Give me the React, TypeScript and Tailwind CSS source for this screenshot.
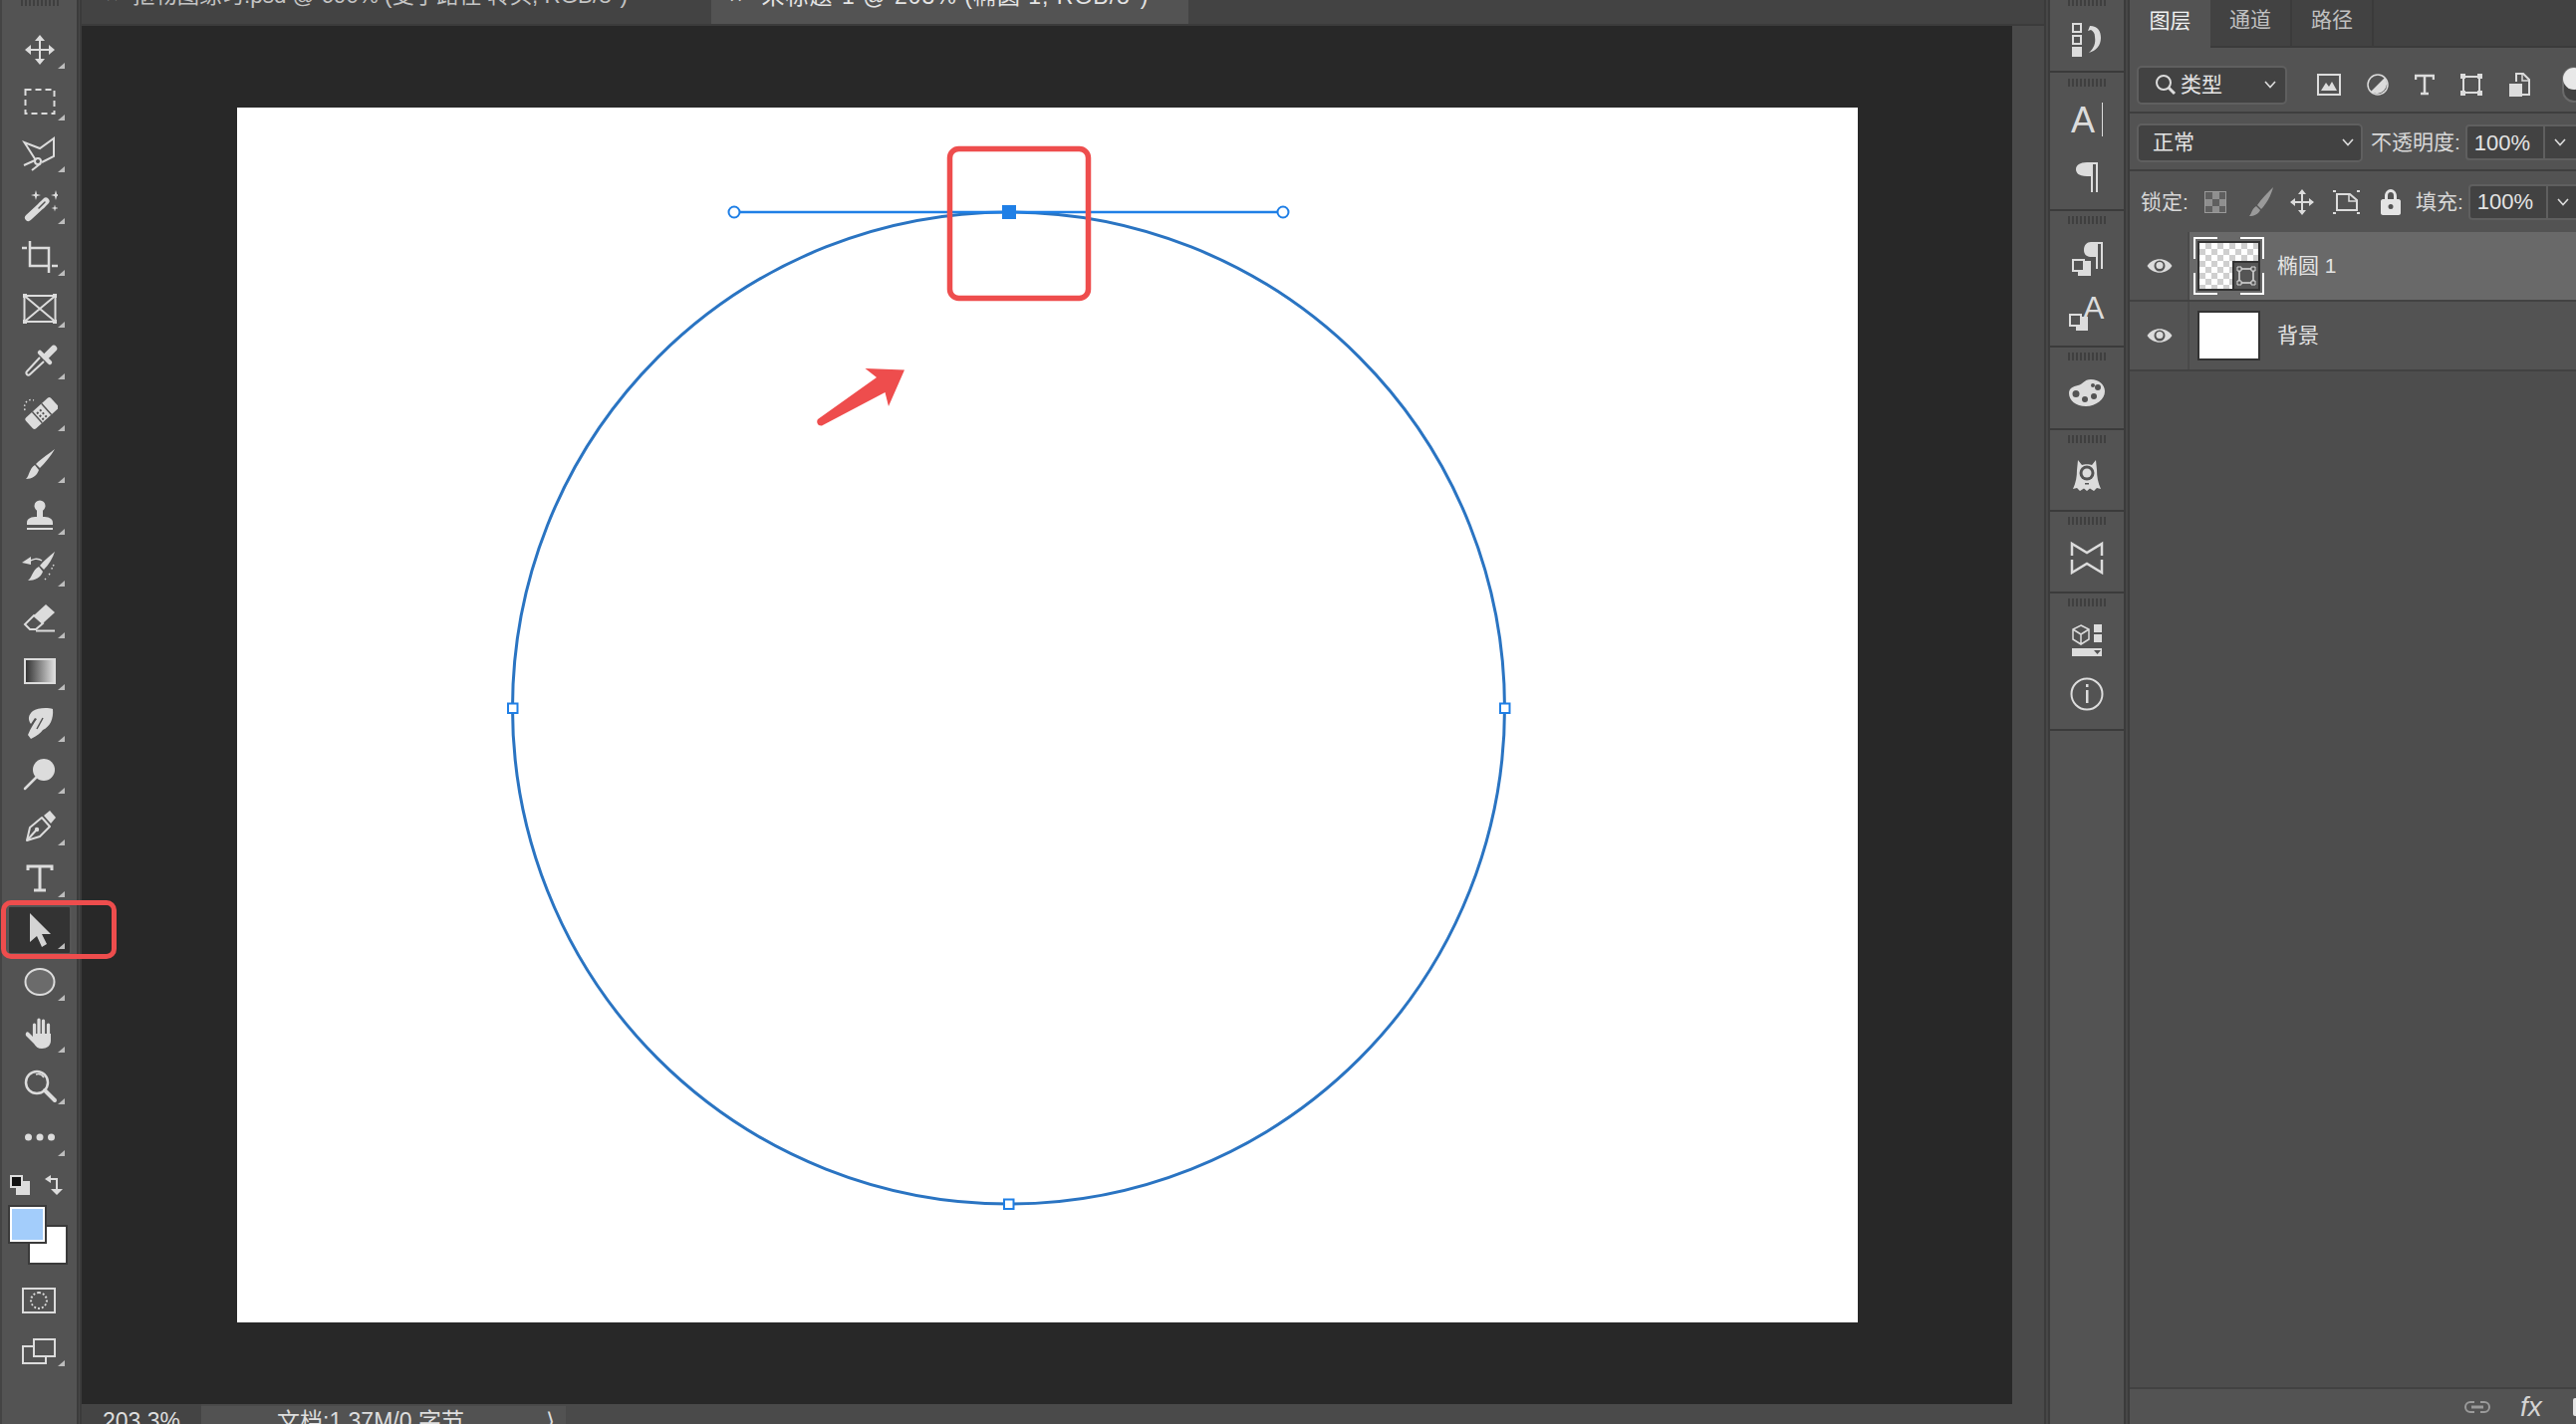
import type { ReactNode } from "react";

const FONT = "font-['Liberation_Sans','Noto_Sans_CJK_SC',sans-serif]";

function Ic({ w = 36, h = 36, children }: { w?: number; h?: number; children: ReactNode }) {
  return (
    <svg width={w} height={h} viewBox={`0 0 ${w} ${h}`} fill="none" className="block shrink-0 text-[#dcdcdc]">
      {children}
    </svg>
  );
}

function Star({ x, y, r }: { x: number; y: number; r: number }) {
  const k = r * 0.22;
  return (
    <path
      fill="currentColor"
      d={`M${x} ${y - r}L${x + k} ${y - k}L${x + r} ${y}L${x + k} ${y + k}L${x} ${y + r}L${x - k} ${y + k}L${x - r} ${y}L${x - k} ${y - k}Z`}
    />
  );
}

function Tool({ children, corner = true, active = false }: { children: ReactNode; corner?: boolean; active?: boolean }) {
  return (
    <div className="relative flex h-[52px] items-center justify-center">
      {active && <div className="absolute inset-x-[5px] inset-y-px rounded-[3px] border-2 border-[#565656] bg-[#333333]" />}
      <div className="relative">{children}</div>
      {corner && (
        <svg width="7" height="6" viewBox="0 0 7 6" className="absolute left-[56px] top-[39px] text-[#bdbdbd]">
          <path d="M7 0V6H0Z" fill="currentColor" />
        </svg>
      )}
    </div>
  );
}

const S = { stroke: "currentColor", strokeWidth: 2 };

const moveIcon = (
  <svg width="32" height="32" viewBox="0 0 32 32" className="block shrink-0 text-[#dcdcdc]" fill="none">
    <path d="M16 3V29M3 16H29" {...S} />
    <path d="M16 1L21 7H11ZM16 31L21 25H11ZM1 16L7 11V21ZM31 16L25 11V21Z" fill="currentColor" />
  </svg>
);

const tools: ReactNode[] = [
  moveIcon,
  <Ic>
    <rect x="3.5" y="6" width="29" height="24" {...S} strokeDasharray="6 4" />
  </Ic>,
  <Ic>
    <path d="M14 25L2.5 7L18 13L32 3V21L20 27" {...S} />
    <circle cx="16" cy="26" r="3" {...S} />
    <path d="M2 30L13 25M10 35L19 28" {...S} />
  </Ic>,
  <Ic>
    <path d="M6.5 30.5L20 18" stroke="currentColor" strokeWidth="7" strokeLinecap="round" />
    <path d="M20 18L24 14" stroke="currentColor" strokeWidth="7" strokeLinecap="round" />
    <path d="M17 21L23 15" stroke="#535353" strokeWidth="1.5" strokeLinecap="round" />
    <Star x={14} y={8} r={5} />
    <Star x={34} y={8} r={5} />
    <Star x={33} y={21} r={3.5} />
  </Ic>,
  <Ic>
    <path d="M8 2V27H27M27 34V9H8M0 9H5M30 27H36" stroke="currentColor" strokeWidth="2.5" />
  </Ic>,
  <Ic>
    <rect x="2.5" y="5" width="31" height="26" {...S} />
    <path d="M2.5 5L33.5 31M33.5 5L2.5 31" {...S} />
    <path d="M1 3h4v4H1zM31 3h4v4h-4zM1 29h4v4H1zM31 29h4v4h-4z" fill="currentColor" />
  </Ic>,
  <Ic>
    <path d="M24 14L32 6" stroke="currentColor" strokeWidth="6.5" strokeLinecap="round" />
    <path d="M18 10L28 20" stroke="currentColor" strokeWidth="4.5" strokeLinecap="round" />
    <path d="M22 19L8 32C6 34 3 31 5 29L18 15" {...S} />
  </Ic>,
  <Ic>
    <g transform="rotate(-42 20 19)">
      <rect x="3" y="11.5" width="34" height="15" rx="2.5" fill="currentColor" />
      <rect x="13" y="11.5" width="1.5" height="15" fill="#535353" />
      <rect x="25.5" y="11.5" width="1.5" height="15" fill="#535353" />
      <path d="M16 15h2v2h-2zM20 15h2v2h-2zM16 19h2v2h-2zM20 19h2v2h-2zM16 23h2v2h-2zM20 23h2v2h-2z" fill="#535353" />
    </g>
    <path d="M3 16C1 9 6 4 12 6" stroke="currentColor" strokeWidth="1.5" strokeDasharray="1.5 2.5" />
  </Ic>,
  <Ic>
    <path d="M33 3C28 7 20 12 14 18L18 22C23 17 29 10 33 3Z" fill="currentColor" />
    <path d="M13 19L17 24C15 30 10 33 4 33C8 29 7 23 13 19Z" fill="currentColor" />
  </Ic>,
  <Ic>
    <circle cx="18" cy="8" r="5.5" fill="currentColor" />
    <path d="M15 12H21V19C26 19 31 20 31 25V27H5V25C5 20 10 19 15 19Z" fill="currentColor" />
    <path d="M5 30H31V32H5Z" fill="currentColor" />
  </Ic>,
  <Ic>
    <path d="M33 2C28 6 22 11 18 16L22 20C27 15 31 8 33 2Z" fill="currentColor" />
    <path d="M17 17L21 22C19 28 13 31 6 31C11 27 10 21 17 17Z" fill="currentColor" />
    <path d="M6 13C10 9 16 8 20 11" stroke="currentColor" strokeWidth="1.5" />
    <path d="M0 13L9 7V15Z" fill="currentColor" />
    <path d="M32 15L29 21M28 24L26 27M24 29L23 30" stroke="currentColor" strokeWidth="1.5" strokeDasharray="1.5 2" />
  </Ic>,
  <Ic>
    <path d="M24 3L33 11L21 22L12 14Z" fill="currentColor" />
    <path d="M12 14L21 22L14 28H8L3 23Z" {...S} />
    <path d="M14 29.5H33" {...S} />
  </Ic>,
  <svg width="32" height="26" viewBox="0 0 32 26" className="block shrink-0">
    <defs>
      <linearGradient id="grad" x1="0" x2="1" y1="0" y2="0">
        <stop offset="0" stopColor="#2d2d2d" />
        <stop offset="1" stopColor="#e0e0e0" />
      </linearGradient>
    </defs>
    <rect x="1" y="1" width="30" height="24" fill="url(#grad)" stroke="#dcdcdc" strokeWidth="2" />
  </svg>,
  <Ic>
    <path
      d="M31 4C25 2 15 3 11 6C6 10 6 15 9 19L13 13L15 14C12 18 9 23 6 30L9 34C15 31 19 28 21 25C28 22 32 14 31 4Z"
      fill="currentColor"
    />
    <path d="M21 13L15 24" stroke="#535353" strokeWidth="1.5" />
  </Ic>,
  <Ic>
    <circle cx="22" cy="13" r="11" fill="currentColor" />
    <path d="M14 21L3 32" stroke="currentColor" strokeWidth="2.5" strokeLinecap="round" />
  </Ic>,
  <Ic>
    <path d="M5 32L8 19L20 9L28 18L18 28Z" {...S} strokeLinejoin="round" />
    <path d="M22 7L28 2L34 9L29 15Z" fill="currentColor" />
    <path d="M5 32L14 22" {...S} />
    <circle cx="15" cy="21" r="2.2" fill="currentColor" />
  </Ic>,
  <Ic>
    <path d="M6 10V6H30V10M18 6V30M12 30H24" stroke="currentColor" strokeWidth="3" />
  </Ic>,
  <Ic>
    <path d="M8 1L29 22H20L25 32L20 35L15 24L8 30Z" fill="#d4d4d4" />
  </Ic>,
  <svg width="32" height="28" viewBox="0 0 32 28" className="block shrink-0">
    <ellipse cx="16" cy="14" rx="14.5" ry="13" fill="#6b6b6b" stroke="#dcdcdc" strokeWidth="2" />
  </svg>,
  <Ic>
    <path d="M11 18H29V25C29 30 25 33 20 33C16 33 14 31 12 28L4 20C3 18 5 15 7 17L11 21Z" fill="currentColor" />
    <path d="M12.5 20V9M17 20V4M21.5 20V5M26.5 20V9" stroke="currentColor" strokeWidth="3.2" strokeLinecap="round" />
  </Ic>,
  <Ic>
    <circle cx="15" cy="15" r="11" stroke="currentColor" strokeWidth="2.5" />
    <path d="M22 10C20 7 17 6 14 7" stroke="currentColor" strokeWidth="1.5" />
    <path d="M23 23L33 33" stroke="currentColor" strokeWidth="4" strokeLinecap="round" />
  </Ic>,
  <Ic>
    <circle cx="6.5" cy="18" r="3.5" fill="currentColor" />
    <circle cx="18" cy="18" r="3.5" fill="currentColor" />
    <circle cx="29.5" cy="18" r="3.5" fill="currentColor" />
  </Ic>,
];

function Grip({ clip = false }: { clip?: boolean }) {
  return (
    <div className={`flex w-[38px] justify-between ${clip ? "h-[6px]" : "h-[8px]"}`}>
      {[0, 1, 2, 3, 4, 5, 6, 7, 8, 9].map((i) => (
        <div key={i} className="h-full w-[2px] bg-[#3f3f3f]" />
      ))}
    </div>
  );
}

function Divider3({ narrow = false }: { narrow?: boolean }) {
  return (
    <div className={`flex shrink-0 ${narrow ? "w-[5px]" : "w-[6px]"}`}>
      <div className="w-[2px] bg-[#3b3b3b]" />
      <div className={`bg-[#474747] ${narrow ? "w-px" : "w-[2px]"}`} />
      <div className="w-[2px] bg-[#3b3b3b]" />
    </div>
  );
}

function Toolbar() {
  return (
    <aside className="flex h-full w-[77px] shrink-0 flex-col items-stretch border-l-2 border-[#444444] bg-[#535353]">
      <div className="flex h-[24px] justify-center">
        <Grip clip />
      </div>
      {tools.map((t, i) => (
        <Tool key={i} active={i === 17} corner={true}>
          {t}
        </Tool>
      ))}

      {/* reset + swap colours */}
      <div className="mt-[12px] flex h-[20px] gap-[15px] pl-[8px]">
        <svg width="20" height="20" viewBox="0 0 20 20" className="text-[#dcdcdc]">
          <rect x="6" y="6" width="14" height="14" fill="currentColor" />
          <rect x="1" y="1" width="11" height="11" fill="#111111" stroke="#dcdcdc" strokeWidth="2" />
        </svg>
        <svg width="20" height="20" viewBox="0 0 20 20" className="text-[#dcdcdc]">
          <path d="M0 4L6 0V8Z M12 20L6 14H18Z" fill="currentColor" />
          <path d="M5 4H12V15" stroke="currentColor" strokeWidth="2" fill="none" />
        </svg>
      </div>

      {/* fore and background swatches */}
      <div className="relative mt-[10px] h-[60px]">
        <div className="absolute left-[26px] top-[20px] h-[40px] w-[40px] border-2 border-[#3a3a3a] bg-white" />
        <div className="absolute left-[6px] top-0 h-[39px] w-[39px] border-2 border-[#3a3a3a] bg-[#a3cdfb] outline-2 -outline-offset-4 outline-white" />
      </div>

      {/* quick mask */}
      <div className="mt-[23px] ml-[20px] flex h-[26px] w-[34px] items-center justify-center border-2 border-[#dcdcdc]">
        <div className="h-[18px] w-[18px] rounded-full border-2 border-dotted border-[#dcdcdc]" />
      </div>

      {/* screen mode */}
      <div className="relative mt-[25px] ml-[20px] h-[26px] w-[34px]">
        <svg width="34" height="26" viewBox="0 0 34 26" fill="none" className="text-[#dcdcdc]">
          <path d="M12 1H33V18H12ZM12 8H1V25H24V18" stroke="currentColor" strokeWidth="2" />
        </svg>
        <svg width="7" height="6" viewBox="0 0 7 6" className="absolute left-[36px] top-[22px] text-[#bdbdbd]">
          <path d="M7 0V6H0Z" fill="currentColor" />
        </svg>
      </div>
    </aside>
  );
}

function TabBar() {
  return (
    <div className="flex h-[26px] shrink-0 border-b-2 border-[#3b3b3b] bg-[#434343] text-[22px] leading-[22px]">
      <div className="flex w-[632px] gap-[14px] overflow-hidden pl-[24px] text-[22.4px] text-[#c4c4c4]">
        <span className="-mt-[15px] whitespace-nowrap">×</span>
        <span className="-mt-[15px] whitespace-nowrap">抠物图练习.psd @ 690% (变子路径 转头, RGB/8*)</span>
      </div>
      <div className="flex w-[479px] gap-[18px] overflow-hidden bg-[#535353] pl-[18px] text-[23px] tracking-[1px] text-[#e4e4e4]">
        <span className="-mt-[15px] whitespace-nowrap">×</span>
        <span className="-mt-[15px] whitespace-nowrap">未标题-1 @ 203% (椭圆 1, RGB/8*)</span>
      </div>
    </div>
  );
}

function StatusBar() {
  return (
    <div className="flex h-[20px] shrink-0 overflow-hidden bg-[#4a4a4a] text-[23px] leading-[26px] text-[#dedede]">
      <div className="w-[120px] border-t-2 border-[#444444] bg-[#444444] pl-[21px] pt-[2px]">203.3%</div>
      <div className="mt-[2px] flex w-[366px] bg-[#525252] pl-[76px] pt-[2px]">
        <span className="whitespace-nowrap">文档:1.37M/0 字节</span>
        <span className="ml-auto pr-[11px]">⟩</span>
      </div>
    </div>
  );
}

function Canvas() {
  return (
    <div className="min-h-0 flex-1 bg-[#282828] pl-[156px] pt-[82px]">
      <div className="relative h-[1220px] w-[1627px] bg-white">
        <svg width="1627" height="1220" viewBox="238 108 1627 1220" fill="none" className="absolute inset-0">
          <circle cx="1012.5" cy="711" r="498" stroke="#2a74c2" strokeWidth="3" />
          <path d="M743 213H1282" stroke="#1f7fe6" strokeWidth="2.5" />
          <circle cx="737" cy="213" r="5.5" fill="#fff" stroke="#1f7fe6" strokeWidth="2" />
          <circle cx="1288" cy="213" r="5.5" fill="#fff" stroke="#1f7fe6" strokeWidth="2" />
          <rect x="1006" y="206" width="14" height="14" fill="#1f7fe6" />
          <rect x="510" y="706.5" width="9.5" height="9.5" fill="#fff" stroke="#1f7fe6" strokeWidth="2" />
          <rect x="1506" y="706.5" width="9.5" height="9.5" fill="#fff" stroke="#1f7fe6" strokeWidth="2" />
          <rect x="1008" y="1204.5" width="9.5" height="9.5" fill="#fff" stroke="#1f7fe6" strokeWidth="2" />
          {/* annotation */}
          <rect x="953.5" y="149.5" width="139" height="150" rx="9" stroke="#ee4d4d" strokeWidth="5.5" />
          <path d="M868.5 370L908 371.5L892 408L888.5 394L825 427.5C821 428 819 424 821 421L880 379Z" fill="#ee4d4d" />
        </svg>
      </div>
    </div>
  );
}

function DockGroup({ h, children }: { h: string; children: ReactNode }) {
  return <div className={`flex shrink-0 flex-col items-center border-b-2 border-[#3b3b3b] ${h}`}>{children}</div>;
}

function Dock() {
  return (
    <div className="flex h-full w-[74px] shrink-0 flex-col bg-[#535353]">
      <DockGroup h="h-[73px]">
        <Grip clip />
        <div className="mt-[17px] -ml-px">
          <Ic w={30} h={34}>
            <path d="M1 1h8v8H1zM1 13h8v8H1z" stroke="currentColor" strokeWidth="2" />
            <rect y="24" width="10" height="10" fill="currentColor" />
            <path d="M18 3C26 3 29 8 29 15C29 23 24 28 17 30C22 25 24 21 23 14C23 10 21 8 19 7L16 8Z" fill="currentColor" />
          </Ic>
        </div>
      </DockGroup>
      <DockGroup h="h-[139px] pt-[6px]">
        <Grip />
        <div className="relative mt-[16px] flex h-[36px] w-[32px] items-center">
          <span className="text-[36px] leading-[36px] text-[#dcdcdc]">A</span>
          <div className="absolute right-0 top-0 h-[34px] w-px bg-[#dcdcdc]" />
        </div>
        <div className="mt-[23px]">
          <Ic w={24} h={31}>
            <path d="M12 1H23V31H21V3H18V31H16V15H12C3 15 1 11 1 8C1 4 5 1 12 1Z" fill="currentColor" />
          </Ic>
        </div>
      </DockGroup>
      <DockGroup h="h-[137px] pt-[5px]">
        <Grip />
        <div className="mt-[17px] ml-[1px]">
          <Ic w={32} h={35}>
            <path d="M19 1H31V28H29V3H26V28H24V16H20C13 16 12 12 12 9C12 4 15 1 19 1Z" fill="currentColor" />
            <rect x="6" y="20" width="13" height="15" fill="currentColor" />
            <rect x="1" y="19" width="11" height="11" fill="#535353" stroke="currentColor" strokeWidth="2" />
          </Ic>
        </div>
        <div className="relative mt-[20px] h-[36px] w-[36px]">
          <Ic w={36} h={36}>
            <rect x="7" y="21" width="12" height="14" fill="currentColor" />
            <rect x="1" y="19" width="11" height="11" fill="#535353" stroke="currentColor" strokeWidth="2" />
          </Ic>
          <span className="absolute -top-[4px] left-[14px] text-[32px] leading-[32px] text-[#dcdcdc]">A</span>
        </div>
      </DockGroup>
      <DockGroup h="h-[83px] pt-[5px]">
        <Grip />
        <div className="mt-[19px]">
          <Ic w={36} h={27}>
            <path
              fill="currentColor"
              fillRule="evenodd"
              d="M22 0C30 0 36 5 36 12C36 20 27 27 17 27C7 27 0 21 0 14C0 9 4 7 9 6C14 5 15 0 22 0ZM7 11A3.5 3.5 0 1 0 7 18A3.5 3.5 0 1 0 7 11ZM16 17A3 3 0 1 0 16 23A3 3 0 1 0 16 17ZM25 14A3 3 0 1 0 25 20A3 3 0 1 0 25 14ZM29 5A3 3 0 1 0 29 11A3 3 0 1 0 29 5ZM24 4A2 2 0 1 0 24 8A2 2 0 1 0 24 4Z"
            />
          </Ic>
        </div>
      </DockGroup>
      <DockGroup h="h-[82px] pt-[5px]">
        <Grip />
        <div className="mt-[17px]">
          <Ic w={28} h={31}>
            <path
              fill="currentColor"
              d="M5 0L9 5C11 4 17 4 19 5L23 0L24 10C24 16 25 23 28 29L24 28L21 31L17 28.5L14 31L11 28.5L7 31L4 28L0 29C3 23 4 16 4 10Z"
            />
            <circle cx="14" cy="13" r="7.5" fill="#535353" />
            <circle cx="14" cy="13" r="4.5" fill="currentColor" />
            <rect x="12" y="23" width="4" height="1.5" fill="#535353" />
          </Ic>
        </div>
      </DockGroup>
      <DockGroup h="h-[82px] pt-[5px]">
        <Grip />
        <div className="mt-[16px]">
          <Ic w={34} h={34}>
            <path d="M2 15V3L17 12L32 3V15M2 19V32L17 23L32 32V19" stroke="currentColor" strokeWidth="2.5" />
          </Ic>
        </div>
      </DockGroup>
      <DockGroup h="h-[138px] pt-[5px]">
        <Grip />
        <div className="mt-[18px]">
          <Ic w={30} h={32}>
            <path d="M9 1L17 5V15L9 20L1 15V5ZM1 5L9 10L17 5M9 10V20" stroke="currentColor" strokeWidth="1.5" />
            <path d="M22 0H30V8H22ZM22 10H30V18H22ZM0 24H30V32H0Z" fill="currentColor" />
            <path d="M22 26H29L25.5 30Z" fill="#535353" />
          </Ic>
        </div>
        <div className="mt-[21px]">
          <Ic w={34} h={34}>
            <circle cx="17" cy="17" r="15.5" stroke="currentColor" strokeWidth="2" />
            <path d="M16 7h2.5v3H16zM16 13h2.5v13H16z" fill="currentColor" />
          </Ic>
        </div>
      </DockGroup>
    </div>
  );
}

function Chevron({ className = "" }: { className?: string }) {
  return (
    <svg width="12" height="8" viewBox="0 0 12 8" fill="none" className={`shrink-0 text-[#dcdcdc] ${className}`}>
      <path d="M1 1L6 6.5L11 1" stroke="currentColor" strokeWidth="1.6" />
    </svg>
  );
}

function PercentBox() {
  return (
    <div className="flex h-[36px] w-[120px] shrink-0 items-center rounded-[4px] border-2 border-[#5f5f5f] bg-[#424242] text-[22px] text-[#e4e4e4]">
      <span className="w-[76px] pl-[7px]">100%</span>
      <div className="h-full w-[2px] bg-[#5f5f5f]" />
      <Chevron className="ml-[9px]" />
    </div>
  );
}

function Eye() {
  return (
    <svg width="26" height="18" viewBox="0 0 26 18">
      <path d="M0.5 9C6 0 20 0 25.5 9C20 18 6 18 0.5 9Z" fill="#dcdcdc" />
      <circle cx="13" cy="9" r="5.5" fill="#535353" />
      <circle cx="13" cy="8.5" r="3.5" fill="#dcdcdc" />
    </svg>
  );
}

function LayerRow({ selected, name, thumb }: { selected?: boolean; name: string; thumb: ReactNode }) {
  return (
    <div className="flex h-[70px] shrink-0 border-b-2 border-[#424242] bg-[#535353]">
      <div className="flex w-[60px] shrink-0 items-center justify-center border-r-2 border-[#4a4a4a] pl-[2px]">
        <Eye />
      </div>
      <div className={`flex flex-1 items-center pl-[8px] ${selected ? "bg-[#696969]" : ""}`}>
        {thumb}
        <span className="ml-[17px] text-[21px] text-[#e4e4e4]">{name}</span>
      </div>
    </div>
  );
}

function LayersPanel() {
  return (
    <section className="flex h-full flex-1 flex-col bg-[#4d4d4d]">
      {/* tabs */}
      <div className="flex h-[48px] shrink-0 bg-[#424242] text-[21px]">
        <div className="flex w-[81px] items-center justify-center bg-[#535353] pb-[7px] text-[#f0f0f0]">图层</div>
        <div className="flex w-[82px] items-center justify-center border-r-2 border-b-2 border-[#3b3b3b] pb-[7px] text-[#c0c0c0]">通道</div>
        <div className="flex w-[82px] items-center justify-center border-r-2 border-b-2 border-[#3b3b3b] pb-[7px] text-[#c0c0c0]">路径</div>
        <div className="flex-1 border-b-2 border-[#3b3b3b]" />
      </div>

      {/* filter */}
      <div className="flex h-[66px] shrink-0 items-center border-b-2 border-[#3f3f3f] bg-[#535353] pl-[7px] pt-[10px]">
        <div className="flex h-[39px] w-[151px] items-center rounded-[5px] border-2 border-[#5f5f5f] bg-[#424242] pl-[16px] text-[21px] text-[#e4e4e4]">
          <svg width="22" height="22" viewBox="0 0 22 22" fill="none" className="shrink-0 text-[#dcdcdc]">
            <circle cx="9" cy="9" r="7" stroke="currentColor" strokeWidth="2" />
            <path d="M14 14L20 20" stroke="currentColor" strokeWidth="3" />
          </svg>
          <span className="ml-[4px]">类型</span>
          <Chevron className="ml-[42px]" />
        </div>
        <div className="ml-[30px] flex items-center gap-[26px]">
          <Ic w={24} h={22}>
            <rect x="1" y="1" width="22" height="20" stroke="currentColor" strokeWidth="2" />
            <path d="M4 17L9 9L12 13L15 8L20 17Z" fill="currentColor" />
          </Ic>
          <Ic w={22} h={22}>
            <circle cx="11" cy="11" r="10" stroke="currentColor" strokeWidth="1.5" />
            <path d="M18 4A10 10 0 0 1 4 18Z" fill="currentColor" />
          </Ic>
          <Ic w={20} h={22}>
            <path d="M1 6V2H19V6M10 2V20M6 20H14" stroke="currentColor" strokeWidth="2.5" />
          </Ic>
          <Ic w={22} h={22}>
            <path d="M3 3H19V19H3Z" stroke="currentColor" strokeWidth="2" />
            <path d="M0 0h5v5H0zM17 0h5v5h-5zM0 17h5v5H0zM17 17h5v5h-5z" fill="#dcdcdc" />
          </Ic>
          <Ic w={22} h={24}>
            <path d="M8 9V1H15L21 7V22H14" stroke="currentColor" strokeWidth="2" />
            <path d="M14 1V8H21" stroke="currentColor" strokeWidth="1.5" />
            <rect x="1" y="11" width="13" height="13" fill="currentColor" />
          </Ic>
        </div>
        <div className="relative ml-[32px] mb-[9px] h-[36px] w-[24px] shrink-0 self-end rounded-full border-2 border-[#6a6a6a] bg-[#424242]">
          <div className="absolute -left-px -top-px h-[22px] w-[22px] rounded-full bg-[#e8e8e8]" />
        </div>
      </div>

      {/* blend mode + opacity */}
      <div className="flex h-[58px] shrink-0 items-center border-b-2 border-[#3f3f3f] bg-[#535353] pl-[7px] pt-[2px] text-[21px] text-[#d8d8d8]">
        <div className="flex h-[39px] w-[227px] items-center rounded-[5px] border-2 border-[#5f5f5f] bg-[#424242] pl-[14px] text-[#e4e4e4]">
          <span>正常</span>
          <Chevron className="ml-auto mr-[7px]" />
        </div>
        <span className="ml-[8px] whitespace-nowrap">不透明度:</span>
        <div className="ml-[5px]">
          <PercentBox />
        </div>
      </div>

      {/* lock row */}
      <div className="flex h-[61px] shrink-0 items-center bg-[#535353] pl-[11px] text-[21px] text-[#d8d8d8]">
        <span className="w-[64px] whitespace-nowrap">锁定:</span>
        <div className="h-[22px] w-[22px] border border-[#9a9a9a] bg-[repeating-conic-gradient(#8f8f8f_0_25%,#5f5f5f_0_50%)] bg-[length:14px_14px]" />
        <svg width="24" height="30" viewBox="0 0 24 30" className="ml-[23px] text-[#9a9a9a]">
          <path d="M24 0C18 6 12 12 8 18L12 22C17 17 22 8 24 0Z" fill="currentColor" />
          <path d="M7 19L11 23C9 27 5 29 0 29C3 26 2 22 7 19Z" fill="currentColor" />
        </svg>
        <svg width="24" height="26" viewBox="0 0 24 26" fill="none" className="ml-[17px] text-[#dcdcdc]">
          <path d="M12 2V24M1 13H23" stroke="currentColor" strokeWidth="2" />
          <path d="M12 0L16 5H8ZM12 26L16 21H8ZM0 13L5 9V17ZM24 13L19 9V17Z" fill="currentColor" />
        </svg>
        <svg width="28" height="26" viewBox="0 0 28 26" fill="none" className="ml-[19px] text-[#dcdcdc]">
          <path d="M4 5H17L24 11V21H4Z" stroke="currentColor" strokeWidth="2" />
          <path d="M16 5V12H24" stroke="currentColor" strokeWidth="1.5" />
          <path d="M0 1h3v2H0zM24 1h3v2h-3zM0 23h3v2H0zM24 23h3v2h-3z" fill="currentColor" />
        </svg>
        <svg width="20" height="26" viewBox="0 0 20 26" className="ml-[20px] text-[#e4e4e4]">
          <path
            fill="currentColor"
            fillRule="evenodd"
            d="M2 10H4V7C4 3 7 0 10 0C13 0 16 3 16 7V10H18C19 10 20 11 20 12V24C20 25 19 26 18 26H2C1 26 0 25 0 24V12C0 11 1 10 2 10ZM7 10H13V7C13 4 12 3 10 3C8 3 7 4 7 7ZM10 15A2.5 2.5 0 1 0 10 20A2.5 2.5 0 1 0 10 15Z"
          />
        </svg>
        <span className="ml-[15px] whitespace-nowrap">填充:</span>
        <div className="ml-[5px]">
          <PercentBox />
        </div>
      </div>

      <LayerRow
        selected
        name="椭圆 1"
        thumb={
          <div className="relative h-[50px] w-[63px] shrink-0 border-2 border-[#333333] bg-white bg-[repeating-conic-gradient(#cfcfcf_0_25%,#ffffff_0_50%)] bg-[length:12px_12px]">
            <svg width="71" height="58" viewBox="0 0 71 58" fill="none" className="absolute -left-[6px] -top-[6px]">
              <path d="M1 22V1H24M47 1H70V22M70 36V57H47M24 57H1V36" stroke="#fff" strokeWidth="2" />
            </svg>
            <div className="absolute bottom-0 right-0 flex h-[28px] w-[26px] items-center justify-center border-l-2 border-t-2 border-[#333333] bg-[#555555]">
              <svg width="20" height="20" viewBox="0 0 20 20" fill="none">
                <path d="M3 3H17V17H3Z" stroke="#dcdcdc" strokeWidth="1.5" />
                <path d="M1 1h4v4H1zM15 1h4v4h-4zM1 15h4v4H1zM15 15h4v4h-4z" fill="#555555" stroke="#dcdcdc" />
              </svg>
            </div>
          </div>
        }
      />
      <LayerRow name="背景" thumb={<div className="h-[50px] w-[63px] shrink-0 border-2 border-[#333333] bg-white" />} />

      {/* footer */}
      <div className="mt-auto flex h-[37px] shrink-0 items-center border-t-2 border-[#424242] bg-[#535353] pl-[335px] text-[#dcdcdc]">
        <svg width="28" height="14" viewBox="0 0 28 14" fill="none" className="text-[#9a9a9a]">
          <path d="M11 2H7A5 5 0 0 0 7 12H11M17 2H21A5 5 0 0 1 21 12H17" stroke="currentColor" strokeWidth="2" />
          <path d="M8 7H20" stroke="currentColor" strokeWidth="3" />
        </svg>
        <span className="ml-[29px] text-[28px] italic leading-[28px] text-[#d4d4d4]">fx</span>
        <div className="ml-[31px] h-[18px] w-[8px] rounded-l-[2px] bg-[#e4e4e4]" />
      </div>
    </section>
  );
}

export default function App() {
  return (
    <div className={`relative flex h-[1430px] w-[2586px] overflow-hidden bg-[#535353] ${FONT}`}>
      <Toolbar />
      <Divider3 narrow />

      {/* doc area + status */}
      <main className="flex h-full w-[1970px] shrink-0 flex-col">
        <TabBar />
        <div className="flex min-h-0 flex-1">
          <Canvas />
          <div className="w-[32px] shrink-0 bg-[#4a4a4a]" />
        </div>
        <StatusBar />
      </main>

      <Divider3 />
      <Dock />
      <Divider3 />
      <LayersPanel />

      {/* red annotation round the tool */}
      <div className="absolute left-px top-[904px] h-[59px] w-[116px] rounded-[10px] border-[5px] border-[#ee4d4d]" />
    </div>
  );
}
